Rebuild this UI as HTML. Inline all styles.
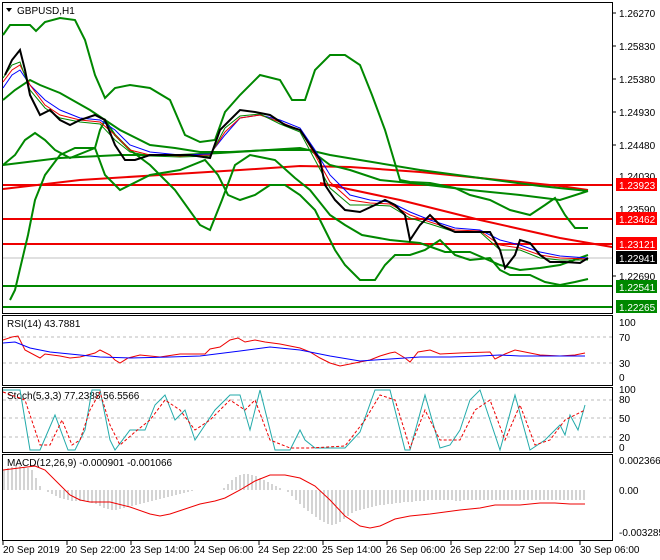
<!DOCTYPE html>
<html><head><style>
body{margin:0;background:#fff;width:660px;height:560px;overflow:hidden}
svg{display:block;font-family:"Liberation Sans",sans-serif;font-size:10px}
</style></head><body>
<svg width="660" height="560" viewBox="0 0 660 560">
<!-- panel borders -->
<g fill="none" stroke="#000" stroke-width="1">
<rect x="2.5" y="2.5" width="610" height="311"/>
<rect x="2.5" y="315.5" width="610" height="70"/>
<rect x="2.5" y="387.5" width="610" height="65"/>
<rect x="2.5" y="454.5" width="610" height="86"/>
</g>
<!-- main chart -->
<g fill="none">
<line x1="3" y1="258" x2="612" y2="258" stroke="#c0c0c0"/>
<g stroke="#e00" stroke-width="2">
<line x1="3" y1="185" x2="612" y2="185"/>
<line x1="3" y1="219" x2="612" y2="219"/>
<line x1="3" y1="244" x2="612" y2="244"/>
<polyline points="3,189 80,180 160,175 240,170 300,166 350,167 420,172 500,180 560,186 588,190"/>
<polyline points="320,183 400,200 480,220 560,238 612,247"/>
</g>
<g stroke="#080" stroke-width="2">
<line x1="3" y1="286" x2="612" y2="286"/>
<line x1="3" y1="307" x2="612" y2="307"/>
<polyline points="3,35 10,25 30,25 36,31 45,22 60,18 75,20 85,40 95,75 105,98 115,88 130,85 150,88 170,100 185,135 200,142 215,140 225,112 240,95 260,75 280,80 292,100 305,100 315,70 330,55 345,55 360,65 372,95 385,130 400,180 410,182 430,183 455,188 470,195 490,200 510,210 530,215 545,205 555,198 565,215 575,228 588,228"/>
<polyline points="3,100 15,90 30,80 40,85 60,93 90,110 120,130 150,145 175,148 200,152 230,152 270,150 300,150 310,150 330,165 350,170 380,180 420,184 470,190 520,195 560,200 588,191"/>
<polyline points="3,165 60,158 120,155 180,155 220,153 300,148 330,155 360,160 420,170 480,178 540,186 588,191"/>
<polyline points="3,165 15,155 25,140 35,133 45,140 55,150 70,158 95,148 105,175 120,190 150,175 180,170 205,160 218,175 228,195 240,200 255,195 270,185 285,185 300,195 315,210 325,230 335,250 345,265 360,280 375,280 385,265 395,255 410,255 425,250 440,240 455,255 470,260 490,258 500,270 510,275 530,275 545,282 560,285 575,282 588,279"/>
<polyline points="10,300 15,290 28,235 35,200 45,175 60,155 75,148 95,148 100,130 105,120 115,135 130,150 150,165 175,190 200,225 210,230 222,200 235,165 250,155 275,160 295,178 310,190 330,215 345,225 362,235 390,240 420,243 445,252 470,252 500,265 520,270 540,268 560,265 588,255"/>
</g>
<polyline stroke="#00f" stroke-width="1" points="3,88 12,75 20,70 30,85 45,100 60,110 80,118 100,120 115,130 130,145 150,152 180,155 210,154 225,135 240,118 260,115 280,120 300,128 315,150 330,175 350,195 370,200 390,202 410,212 430,220 455,228 480,230 500,240 520,245 540,252 560,256 588,258"/>
<polyline stroke="#e00" stroke-width="1" points="3,82 12,70 20,65 30,85 45,105 60,115 80,120 100,122 115,135 130,150 150,155 180,156 210,155 225,132 240,118 260,115 280,122 300,130 315,155 330,182 350,200 370,203 390,204 410,215 430,222 455,230 480,231 500,245 520,248 540,255 560,258 588,259"/>
<polyline stroke="#080" stroke-width="1" points="3,78 12,65 20,62 30,90 45,108 60,118 80,122 100,124 115,140 130,152 150,156 180,157 210,156 225,128 240,116 260,114 280,124 300,132 315,160 330,188 350,205 370,205 390,206 410,218 430,224 455,232 480,232 500,250 520,250 540,258 560,260 588,260"/>
<polyline stroke="#000" stroke-width="2" points="5,75 12,60 20,50 25,70 30,95 40,115 50,110 60,120 70,125 80,120 95,115 105,120 115,145 125,160 135,160 150,155 170,155 190,155 210,158 220,130 230,120 240,110 255,112 270,115 285,125 300,130 310,145 320,160 325,185 335,200 345,210 360,212 375,205 385,200 395,205 405,215 410,240 420,225 430,215 440,225 455,232 470,232 490,232 500,250 505,268 515,255 520,240 530,243 540,255 550,262 565,262 580,263 588,258"/>
</g>
<text x="17" y="14" font-size="10">GBPUSD,H1</text>
<polygon points="6,8 12,8 9,12" fill="#000"/>
<!-- right axis -->
<g font-size="10" fill="#000">
<text x="619" y="17">1.26270</text>
<text x="619" y="50">1.25830</text>
<text x="619" y="83">1.25380</text>
<text x="619" y="116">1.24930</text>
<text x="619" y="149">1.24480</text>
<text x="619" y="180">1.24030</text>
<text x="619" y="213">1.23590</text>
<text x="619" y="280">1.22690</text>
</g>
<g stroke="#000"><line x1="612" y1="13" x2="616" y2="13"/><line x1="612" y1="46" x2="616" y2="46"/><line x1="612" y1="79" x2="616" y2="79"/><line x1="612" y1="112" x2="616" y2="112"/><line x1="612" y1="145" x2="616" y2="145"/><line x1="612" y1="276" x2="616" y2="276"/></g>
<rect x="616" y="178" width="41" height="13" fill="#f00"/><text x="619" y="189" fill="#fff">1.23923</text>
<rect x="616" y="212" width="41" height="13" fill="#f00"/><text x="619" y="223" fill="#fff">1.23462</text>
<rect x="616" y="237" width="41" height="13" fill="#f00"/><text x="619" y="248" fill="#fff">1.23121</text>
<rect x="616" y="251" width="41" height="13" fill="#000"/><text x="619" y="262" fill="#fff">1.22941</text>
<rect x="616" y="280" width="41" height="13" fill="#080"/><text x="619" y="291" fill="#fff">1.22541</text>
<rect x="616" y="300" width="41" height="13" fill="#080"/><text x="619" y="311" fill="#fff">1.22265</text>
<!-- RSI -->
<g stroke="#bbb" stroke-dasharray="3,3"><line x1="3" y1="337" x2="612" y2="337"/><line x1="3" y1="363" x2="612" y2="363"/></g>
<text x="7" y="327">RSI(14) 43.7881</text>
<text x="619" y="326">100</text><text x="619" y="341">70</text><text x="619" y="367">30</text><text x="619" y="381">0</text>
<polyline fill="none" stroke="#e00" points="3,340 12,337 18,336 25,350 40,358 45,354 60,356 70,358 80,357 95,353 100,350 110,355 115,360 120,363 128,358 140,355 160,357 180,354 205,354 210,349 220,347 230,340 238,338 245,342 255,340 265,342 280,344 300,348 310,352 320,358 330,363 340,366 350,364 370,360 380,356 390,353 395,352 405,358 410,362 418,352 430,350 440,354 460,353 490,352 495,359 505,354 515,350 525,352 540,355 560,356 575,355 585,353"/>
<polyline fill="none" stroke="#00f" points="3,343 15,342 30,348 50,352 80,355 100,357 130,358 170,357 200,356 240,351 270,347 300,350 330,356 360,361 390,359 420,357 450,357 480,356 500,355 520,356 550,356 585,356"/>
<!-- Stoch -->
<g stroke="#bbb" stroke-dasharray="3,3"><line x1="3" y1="400" x2="612" y2="400"/><line x1="3" y1="418" x2="612" y2="418"/><line x1="3" y1="437" x2="612" y2="437"/></g>
<text x="7" y="399">Stoch(5,3,3) 77.2388 56.5566</text>
<text x="619" y="393">100</text><text x="619" y="403">80</text><text x="619" y="422">50</text><text x="619" y="441">20</text><text x="619" y="451">0</text>
<polyline fill="none" stroke="#2aa" points="3,390 20,390 30,450 40,450 55,415 68,450 75,450 85,430 92,390 100,390 110,440 115,450 130,430 145,430 155,405 165,395 175,420 185,410 195,440 205,425 215,410 230,395 240,395 250,430 260,390 275,450 290,450 300,430 305,440 315,448 345,448 360,432 375,390 390,390 405,450 410,450 425,395 440,448 450,445 460,430 470,400 480,390 490,420 500,450 515,395 530,450 545,440 560,425 565,435 570,415 578,430 585,405"/>
<polyline fill="none" stroke="#e00" stroke-dasharray="3,2" points="3,392 25,400 40,445 50,445 62,420 72,445 80,440 90,410 100,392 110,425 120,445 135,432 150,420 165,400 180,410 195,430 210,420 230,400 245,410 255,400 270,440 290,448 310,448 345,446 365,420 380,395 395,400 410,448 425,410 440,440 460,440 475,410 490,400 505,440 520,405 535,445 550,440 565,420 585,410"/>
<!-- MACD -->
<text x="7" y="466">MACD(12,26,9) -0.000901 -0.001066</text>
<text x="619" y="464">0.002366</text><text x="619" y="494">0.00</text><text x="619" y="536">-0.003285</text>
<g stroke="#aaa" stroke-width="1">
<path d="M4 490V470M8 490V468M12 490V467M16 490V466M20 490V466M24 490V467M28 490V468M32 490V470M36 490V478M40 490V486M44 490V490M48 490V492M52 490V494M56 490V496M60 490V498M64 490V499M68 490V500M72 490V501M76 490V501M80 490V501M84 490V501M88 490V502M92 490V503M96 490V504M100 490V506M104 490V508M108 490V509M112 490V510M116 490V510M120 490V509M124 490V508M128 490V507M132 490V506M136 490V505M140 490V504M144 490V503M148 490V502M152 490V501M156 490V500M160 490V499M164 490V498M168 490V497M172 490V496M176 490V495M180 490V494M184 490V493M188 490V492M192 490V491M196 490V490M200 490V490M204 490V490M208 490V490M212 490V490M216 490V490M220 490V490M224 490V488M228 490V484M232 490V480M236 490V477M240 490V475M244 490V474M248 490V474M252 490V475M256 490V476M260 490V478M264 490V480M268 490V482M272 490V484M276 490V486M280 490V488M284 490V490M288 490V492M292 490V496M296 490V500M300 490V504M304 490V508M308 490V511M312 490V514M316 490V517M320 490V520M324 490V522M328 490V524M332 490V525M336 490V524M340 490V522M344 490V519M348 490V516M352 490V513M356 490V511M360 490V510M364 490V509M368 490V508M372 490V507M376 490V506M380 490V505M384 490V505M388 490V504M392 490V504M396 490V503M400 490V503M404 490V502M408 490V502M412 490V502M416 490V501M420 490V501M424 490V501M428 490V500M432 490V500M436 490V500M440 490V500M444 490V500M448 490V500M452 490V500M456 490V501M460 490V501M464 490V500M468 490V500M472 490V500M476 490V500M480 490V500M484 490V500M488 490V500M492 490V500M496 490V500M500 490V500M504 490V500M508 490V500M512 490V500M516 490V500M520 490V500M524 490V500M528 490V500M532 490V500M536 490V500M540 490V500M544 490V500M548 490V500M552 490V500M556 490V500M560 490V500M564 490V500M568 490V500M572 490V500M576 490V500M580 490V500M584 490V500"/>
</g>
<polyline fill="none" stroke="#e00" points="3,470 35,466 45,470 60,485 70,495 80,500 90,502 110,502 130,507 150,514 160,516 170,514 185,509 200,504 215,501 225,498 240,490 255,481 270,475 285,475 300,478 315,486 330,500 345,516 360,526 370,528 380,526 395,519 410,516 430,514 460,510 480,508 495,505 520,505 540,503 555,503 570,504 585,504"/>
<!-- bottom axis -->
<g stroke="#000"><line x1="3" y1="541" x2="3" y2="545"/><line x1="67" y1="541" x2="67" y2="545"/><line x1="131" y1="541" x2="131" y2="545"/><line x1="195" y1="541" x2="195" y2="545"/><line x1="259" y1="541" x2="259" y2="545"/><line x1="323" y1="541" x2="323" y2="545"/><line x1="387" y1="541" x2="387" y2="545"/><line x1="451" y1="541" x2="451" y2="545"/><line x1="515" y1="541" x2="515" y2="545"/><line x1="580" y1="541" x2="580" y2="545"/></g>
<g font-size="10"><text x="3" y="553">20 Sep 2019</text><text x="66" y="553">20 Sep 22:00</text><text x="130" y="553">23 Sep 14:00</text><text x="194" y="553">24 Sep 06:00</text><text x="258" y="553">24 Sep 22:00</text><text x="322" y="553">25 Sep 14:00</text><text x="386" y="553">26 Sep 06:00</text><text x="450" y="553">26 Sep 22:00</text><text x="514" y="553">27 Sep 14:00</text><text x="580" y="553">30 Sep 06:00</text></g>
</svg>
</body></html>
